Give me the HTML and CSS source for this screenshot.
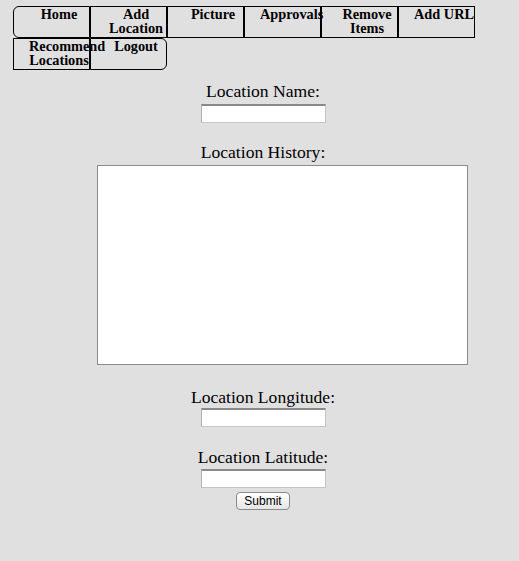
FILE: index.html
```html
<!DOCTYPE html>
<html>
<head>
<meta charset="utf-8">
<title>Add Location</title>
<link rel="stylesheet" href="styles.css">
</head>
<body>
<ul class="nav">
  <li class="nav-item first">Home</li>
  <li class="nav-item">Add Location</li>
  <li class="nav-item">Picture</li>
  <li class="nav-item">Approvals</li>
  <li class="nav-item">Remove Items</li>
  <li class="nav-item nowrap">Add URL</li>
  <li class="nav-item">Recommend Locations</li>
  <li class="nav-item last">Logout</li>
</ul>
<form class="form">
  <label class="label label-name">Location Name:</label>
  <input class="field field-name" type="text">
  <label class="label label-history">Location History:</label>
  <textarea class="history"></textarea>
  <label class="label label-long">Location Longitude:</label>
  <input class="field field-long" type="text">
  <label class="label label-lat">Location Latitude:</label>
  <input class="field field-lat" type="text">
  <button class="submit" type="button">Submit</button>
</form>
</body>
</html>
```
FILE: styles.css
```css
html, body {
  margin: 0;
  padding: 0;
  background: #e0e0e0;
}
body {
  font-family: "Liberation Serif", "Times New Roman", serif;
  color: #000;
  width: 519px;
  height: 561px;
}
.nav {
  list-style: none;
  margin: 0;
  padding: 6px 0 0 13px;
  display: flex;
  flex-wrap: wrap;
  width: 462px;
}
.nav-item {
  box-sizing: border-box;
  width: 77px;
  height: 32px;
  border: 1px solid #000;
  padding: 0 0 0 15px;
  font-weight: bold;
  font-size: 14.3px;
  line-height: 14px;
  text-align: center;
  white-space: normal;
  color: #000;
}
.nowrap {
  white-space: nowrap;
}
.first {
  border-radius: 6px 0 0 6px;
}
.last {
  border-radius: 0 6px 6px 0;
}
.form {
  display: flex;
  flex-direction: column;
  align-items: center;
  padding: 12px 0 0 7px;
  margin: 0;
}
.label {
  display: block;
  font-size: 17.6px;
  line-height: 18px;
  height: 20px;
  text-align: center;
}
.field {
  box-sizing: border-box;
  width: 125px;
  height: 19px;
  background: #fff;
  border: 1px solid #c4c4c4;
  border-top: 2px solid #8a8a8a;
  border-left-color: #b0b0b0;
  padding: 0;
  margin: 0;
}
.field-name { margin-top: 2px; }
.label-history { margin-top: 20px; }
.history {
  box-sizing: border-box;
  width: 371px;
  height: 200px;
  margin: 2px 0 0 39px;
  border: 1px solid #8c8c8c;
  background: #fff;
  resize: none;
  padding: 0;
}
.label-long { margin-top: 23px; }
.field-long { margin-top: 0; }
.label-lat { margin-top: 21px; }
.field-lat { margin-top: 1px; }
.submit {
  box-sizing: border-box;
  margin-top: 4px;
  width: 54px;
  height: 18px;
  padding: 0;
  font-family: "Liberation Sans", Arial, sans-serif;
  font-size: 12px;
  line-height: 16px;
  color: #000;
  border: 1px solid #8a8a8a;
  border-radius: 4px;
  background: linear-gradient(#ffffff, #f2f2f2 50%, #e6e6e6);
}
```
